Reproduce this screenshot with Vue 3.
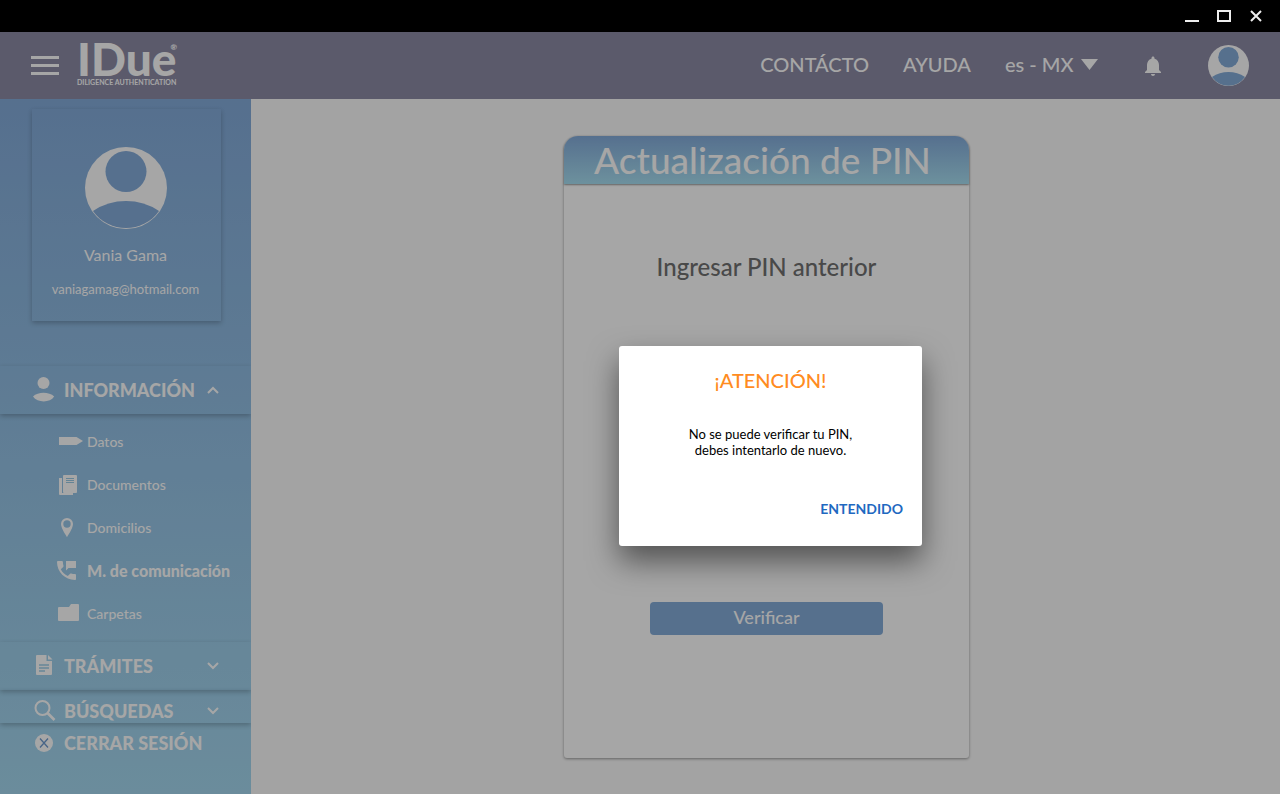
<template>
  <div class="app">
    <div class="window-bar">
      <button class="window-btn" aria-label="Minimizar">
        <svg width="14" height="14" viewBox="0 0 14 14"><rect y="11" width="14" height="2" fill="#eee" /></svg>
      </button>
      <button class="window-btn" aria-label="Maximizar">
        <svg width="14" height="14" viewBox="0 0 14 14"><rect x="1" y="2" width="12" height="10" fill="none" stroke="#eee" stroke-width="2" /></svg>
      </button>
      <button class="window-btn" aria-label="Cerrar">
        <svg width="14" height="14" viewBox="0 0 14 14"><path d="M2 2l10 10M12 2L2 12" stroke="#eee" stroke-width="2" /></svg>
      </button>
    </div>

    <div class="workspace">
      <header class="topbar">
        <button class="menu-btn" aria-label="Menú">
          <span></span>
          <span></span>
          <span></span>
        </button>
        <a href="#" class="logo">
          <span class="logo-name">IDue<sup class="logo-mark">®</sup></span>
          <span class="logo-tagline">DILIGENCE AUTHENTICATION</span>
        </a>
        <nav class="topbar-nav">
          <a href="#">CONTÁCTO</a>
          <a href="#">AYUDA</a>
          <div class="language">
            <select v-model="language" aria-label="Idioma">
              <option value="es-MX">es - MX</option>
              <option value="en-US">en - US</option>
            </select>
            <svg width="17" height="11" viewBox="0 0 17 11"><path d="M0 0h17L8.5 11z" fill="#fff" /></svg>
          </div>
        </nav>
        <button class="icon-btn" aria-label="Notificaciones">
          <svg width="16" height="20" viewBox="4 2 16 20" fill="#fff">
            <path d="M12 22c1.100 0 2-.9 2-2h-4c0 1.100.9 2 2 2zm6-6v-5c0-3.070-1.640-5.640-4.500-6.320V4c0-.83-.67-1.500-1.500-1.500s-1.500.67-1.500 1.500v.68C7.630 5.360 6 7.920 6 11v5l-2 2v1h16v-1l-2-2z" />
          </svg>
        </button>
        <button class="icon-btn" aria-label="Mi cuenta">
          <svg width="41" height="41" viewBox="0 0 82 82">
            <circle cx="41" cy="41" r="41" fill="#fff" />
            <circle cx="41" cy="24.500" r="20.500" fill="#84acd9" />
            <path d="M8 64A60 60 0 0 1 74 64A40 40 0 0 1 8 64z" fill="#84acd9" />
          </svg>
        </button>
      </header>

      <div class="content">
        <aside class="sidebar">
          <div class="profile">
            <svg width="82" height="82" viewBox="0 0 82 82">
              <circle cx="41" cy="41" r="41" fill="#fff" />
              <circle cx="41" cy="24.500" r="20.500" fill="#84acdb" />
              <path d="M8 64A60 60 0 0 1 74 64A40.400 40.400 0 0 1 8 64z" fill="#84acdb" />
            </svg>
            <p class="profile-name">Vania Gama</p>
            <p class="profile-email">vaniagamag@hotmail.com</p>
          </div>

          <button class="section" @click="infoOpen = !infoOpen">
            <svg class="section-icon" viewBox="0 0 24 26" fill="#fff">
              <circle cx="11.500" cy="6" r="6" />
              <path d="M1 19.500C6 14.500 17 14.500 22.200 19.500C18 26 5.500 26 1 19.500z" />
            </svg>
            <span>INFORMACIÓN</span>
            <svg class="chevron" :class="{ closed: !infoOpen }" viewBox="0 0 12 8"><path d="M1 7l5-5 5 5" /></svg>
          </button>

          <ul v-if="infoOpen" class="submenu">
            <li v-for="item in items" :key="item.id">
              <a href="#" :class="{ active: current === item.id }" @click.prevent="current = item.id">
                <svg width="26" height="24" viewBox="0 0 26 24" fill="#fff">
                  <path v-if="item.id === 'datos'" d="M2 7h17.500l6.500 4-6.500 4H2z" />
                  <template v-else-if="item.id === 'documentos'">
                    <path d="M2 5h3v15h11v2H3q-1 0-1-1z" />
                    <rect x="6" y="2" width="14" height="18" rx="1" />
                    <path d="M9 5.500h8M9 7.500h8M9 9.500h8" stroke="#98c9e5" />
                  </template>
                  <path v-else-if="item.id === 'domicilios'" fill-rule="evenodd" d="M10 2a6 6 0 0 0-6 6c0 4.500 6 13 6 13s6-8.500 6-13a6 6 0 0 0-6-6zm0 2.300a3.700 3.700 0 1 1 0 7.400a3.700 3.700 0 0 1 0-7.400z" />
                  <template v-else-if="item.id === 'comunicacion'">
                    <path d="M3.800 10.200c1.500 3 4 5.400 7 6.900l2.300-2.300c.3-.3.7-.4 1.100-.3 1.200.4 2.400.6 3.700.6.600 0 1.100.5 1.100 1.100v3.700c0 .6-.5 1.100-1.100 1.100C8 21 0 13 0 3.100 0 2.500.5 2 1.100 2h3.700c.6 0 1.100.5 1.100 1.100 0 1.300.2 2.600.6 3.700.1.400 0 .8-.3 1.100z" />
                    <path d="M9 2h10v7h-7.500L9 11.500z" />
                  </template>
                  <path v-else d="M1 6q0-1 1-1h10l2-3h7q1 0 1 1v15q0 1-1 1H2q-1 0-1-1z" />
                </svg>
                <span>{{ item.name }}</span>
              </a>
            </li>
          </ul>

          <button class="section">
            <svg class="section-icon" viewBox="0 0 24 26">
              <path d="M5 2h9.500v6H20v13q0 1-1 1H5q-1 0-1-1V3q0-1 1-1z" fill="#fff" />
              <path d="M16 2l4.500 4.500H16z" fill="#fff" />
              <path d="M7 12h10M7 15h10M7 18h6" stroke="#9fd0ea" stroke-width="1.400" />
            </svg>
            <span>TRÁMITES</span>
            <svg class="chevron" viewBox="0 0 12 8"><path d="M1 1l5 5 5-5" /></svg>
          </button>
          <button class="section compact">
            <svg class="section-icon" viewBox="0 0 24 26" fill="none" stroke="#fff">
              <circle cx="10.500" cy="10" r="7" stroke-width="2" />
              <path d="M15.500 15l7 7" stroke-width="2.600" />
            </svg>
            <span>BÚSQUEDAS</span>
            <svg class="chevron" viewBox="0 0 12 8"><path d="M1 1l5 5 5-5" /></svg>
          </button>
          <button class="section logout">
            <svg class="section-icon" viewBox="0 0 24 26">
              <circle cx="12" cy="13" r="9" fill="#fff" />
              <path d="M8 8.500l8 9M16 8.500l-8 9" stroke="#6f9bd0" stroke-width="1.300" />
            </svg>
            <span>CERRAR SESIÓN</span>
          </button>
        </aside>

        <main class="main">
          <section class="pin-card">
            <h1 class="pin-title">Actualización de PIN</h1>
            <div class="pin-body">
              <h2>Ingresar PIN anterior</h2>
              <button class="verify-btn" @click="showAlert = true">Verificar</button>
            </div>
          </section>
        </main>
      </div>

      <div v-if="showAlert" class="overlay">
        <div class="dialog" role="alertdialog" aria-labelledby="dialog-title">
          <h3 id="dialog-title">¡ATENCIÓN!</h3>
          <p>No se puede verificar tu PIN,<br />debes intentarlo de nuevo.</p>
          <button @click="showAlert = false">ENTENDIDO</button>
        </div>
      </div>
    </div>
  </div>
</template>

<script setup>
import { ref } from 'vue'

const language = ref('es-MX')
const infoOpen = ref(true)
const current = ref('comunicacion')
const showAlert = ref(true)

const items = [
  { id: 'datos', name: 'Datos' },
  { id: 'documentos', name: 'Documentos' },
  { id: 'domicilios', name: 'Domicilios' },
  { id: 'comunicacion', name: 'M. de comunicación' },
  { id: 'carpetas', name: 'Carpetas' }
]
</script>

<style>
body {
  margin: 0;
}
</style>

<style scoped>
.app {
  display: flex;
  flex-direction: column;
  min-height: 100vh;
  font-family: Lato, "Open Sans", sans-serif;
  color: #fff;
}

.app * {
  box-sizing: border-box;
}

button {
  font: inherit;
  color: inherit;
  background: none;
  border: none;
  padding: 0;
  cursor: pointer;
}

a {
  color: inherit;
  text-decoration: none;
}

svg {
  display: block;
  flex-shrink: 0;
}

.window-bar {
  display: flex;
  justify-content: flex-end;
  height: 32px;
  padding-right: 8px;
  background: #000;
}

.window-btn {
  display: flex;
  align-items: center;
  justify-content: center;
  width: 32px;
}

.workspace {
  position: relative;
  flex: 1;
  display: flex;
  flex-direction: column;
}

/* 顶栏 */
.topbar {
  display: flex;
  align-items: center;
  height: 67px;
  padding: 0 31px;
  background: #8c8aa5;
}

.menu-btn {
  display: flex;
  flex-direction: column;
  gap: 5px;
  width: 28px;
}

.menu-btn span {
  height: 3px;
  background: #fff;
}

.logo {
  display: flex;
  flex-direction: column;
  margin-left: 18px;
  padding-bottom: 6px;
}

.logo-name {
  display: flex;
  font-size: 46px;
  font-weight: 900;
  line-height: 38px;
}

.logo-mark {
  width: 0;
  margin-left: -6px;
  font-size: 8px;
  line-height: 14px;
}

.logo-tagline {
  font-size: 7px;
  font-weight: 700;
  line-height: 8px;
}

.topbar-nav {
  display: flex;
  align-items: center;
  gap: 34px;
  margin-left: auto;
  padding-bottom: 3px;
  font-size: 20px;
  font-weight: 500;
}

.language {
  display: flex;
  align-items: center;
}

.language select {
  width: 76px;
  padding: 0;
  border: none;
  background: none;
  font: inherit;
  color: inherit;
  appearance: none;
}

.language option {
  color: #333;
}

.icon-btn {
  margin-left: 47px;
}

/* 侧边栏 */
.content {
  flex: 1;
  display: flex;
}

.sidebar {
  flex: 0 0 251px;
  display: flex;
  flex-direction: column;
  padding-top: 10px;
  background: linear-gradient(#84acdb, #a5d8f0);
}

.profile {
  display: flex;
  flex-direction: column;
  align-items: center;
  margin: 0 30px 45px 32px;
  padding: 38px 2px 22px 0;
  box-shadow: 0 2px 5px rgba(0, 0, 0, 0.24);
}

.profile p {
  margin: 0;
  line-height: 20px;
}

.profile .profile-name {
  margin: 16px 0 14px;
  font-size: 16px;
}

.profile-email {
  font-size: 13px;
}

.section {
  display: flex;
  align-items: center;
  gap: 8px;
  height: 48px;
  padding: 0 32px;
  font-size: 18px;
  font-weight: 900;
  box-shadow: 0 2px 5px rgba(0, 0, 0, 0.24);
}

.section.compact {
  height: 33px;
  padding-top: 8px;
}

.section.logout {
  height: 40px;
  box-shadow: none;
}

.section-icon {
  width: 24px;
  height: 26px;
}

.chevron {
  width: 12px;
  height: 8px;
  margin-left: auto;
  fill: none;
  stroke: #fff;
  stroke-width: 2;
}

.chevron.closed {
  transform: rotate(180deg);
}

.submenu {
  margin: 0;
  padding: 6px 0 7px 57px;
  list-style: none;
}

.submenu a {
  display: flex;
  align-items: center;
  gap: 4px;
  height: 43px;
  font-size: 14px;
  font-weight: 500;
}

.submenu a.active {
  font-size: 16px;
  font-weight: 900;
}

/* PIN 卡片 */
.main {
  flex: 1;
  padding: 37px 20px 36px 22px;
  background: #fbfbfb;
}

.pin-card {
  max-width: 405px;
  margin: 0 auto;
  border-radius: 14px 14px 3px 3px;
  background: #fff;
  box-shadow: 0 1px 3px rgba(0, 0, 0, 0.4);
}

.pin-title {
  margin: 0;
  padding-right: 8px;
  border-radius: 14px 14px 0 0;
  background: linear-gradient(#84acdb, #a8dff2);
  box-shadow: 0 1px 2px rgba(0, 0, 0, 0.4);
  font-size: 37px;
  font-weight: 500;
  line-height: 48px;
  text-align: center;
}

.pin-body {
  display: flex;
  flex-direction: column;
  align-items: center;
  padding: 67px 20px 123px;
}

.pin-body h2 {
  margin: 0 0 319px;
  font-size: 24px;
  font-weight: 500;
  line-height: 32px;
  color: #707070;
}

.verify-btn {
  width: 233px;
  height: 33px;
  padding-bottom: 4px;
  border-radius: 4px;
  background: #84acd9;
  font-size: 18px;
  font-weight: 500;
}

/* 提示弹窗 */
.overlay {
  position: absolute;
  inset: 0;
  display: flex;
  align-items: center;
  justify-content: center;
  padding: 66px 0 0 261px;
  background: rgba(0, 0, 0, 0.35);
}

.dialog {
  display: flex;
  flex-direction: column;
  width: 303px;
  padding: 22px 19px 25px;
  border-radius: 3px;
  background: #fff;
  box-shadow: 0 15px 30px rgba(0, 0, 0, 0.5);
  text-align: center;
  color: #000;
}

.dialog h3 {
  margin: 0 0 34px;
  font-size: 20px;
  font-weight: 500;
  line-height: 24px;
  color: #ff8c1f;
}

.dialog p {
  margin: 0 0 39px;
  font-size: 13px;
  line-height: 16px;
}

.dialog button {
  align-self: flex-end;
  font-size: 14px;
  font-weight: 700;
  line-height: 24px;
  color: #1f69c1;
}
</style>
